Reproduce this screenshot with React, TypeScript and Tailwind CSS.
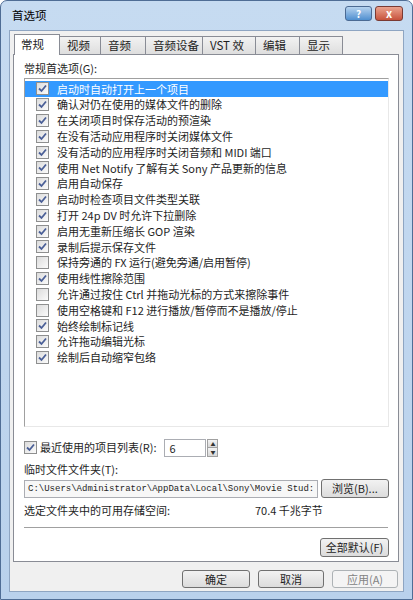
import { useState } from 'react'

const items: [string, boolean][] = [
  ['启动时自动打开上一个项目', true],
  ['确认对仍在使用的媒体文件的删除', true],
  ['在关闭项目时保存活动的预渲染', true],
  ['在没有活动应用程序时关闭媒体文件', true],
  ['没有活动的应用程序时关闭音频和 MIDI 端口', true],
  ['使用 Net Notify 了解有关 Sony 产品更新的信息', true],
  ['启用自动保存', true],
  ['启动时检查项目文件类型关联', true],
  ['打开 24p DV 时允许下拉删除', true],
  ['启用无重新压缩长 GOP 渲染', true],
  ['录制后提示保存文件', true],
  ['保持旁通的 FX 运行(避免旁通/启用暂停)', false],
  ['使用线性擦除范围', true],
  ['允许通过按住 Ctrl 并拖动光标的方式来擦除事件', false],
  ['使用空格键和 F12 进行播放/暂停而不是播放/停止', false],
  ['始终绘制标记线', true],
  ['允许拖动编辑光标', true],
  ['绘制后自动缩窄包络', true],
]

const tabs = ['常规', '视频', '音频', '音频设备', 'VST 效果', '编辑', '显示']
const tabWidths = ['w-[41px]', 'w-[45px]', 'w-[57px]', 'w-[53px]', 'w-[44px]', 'w-[43px]']

function Check({ on }: { on: boolean }) {
  return (
    <div className="w-[13px] h-[13px] border border-[#8e8f8f] bg-gradient-to-br from-[#dcdcdc] to-[#fbfbfb] flex items-center justify-center shrink-0">
      {on && (
        <svg width="9" height="9" viewBox="0 0 9 9">
          <path d="M1 4.5 L3.5 7 L8 1.5" fill="none" stroke="#4a5f97" strokeWidth="1.8" />
        </svg>
      )}
    </div>
  )
}

function Btn({ children, className = '' }: { children: React.ReactNode; className?: string }) {
  return (
    <div className={`border border-[#707070] rounded-[3px] bg-gradient-to-b from-[#f2f2f2] to-[#dcdcdc] flex items-center justify-center text-[11px] ${className}`}>
      {children}
    </div>
  )
}

export default function App() {
  const [sel] = useState(0)
  return (
    <div
      className="w-[413px] h-[600px] bg-gradient-to-b from-[#c6dbf1] to-[#b9d1ec] border border-[#4f6d95] rounded-t-[7px] flex flex-col text-[#1e1e1e]"
      style={{ fontFamily: '"Noto Sans CJK SC", "Liberation Sans", sans-serif' }}
    >
      {/* title bar */}
      <div className="h-[29px] flex items-center justify-between pl-[11px] pr-[9px]">
        <span className="text-[11.5px] text-black">首选项</span>
        <div className="flex gap-[3px] -mt-[4px]">
          <div className="w-[27px] h-[15px] rounded-[3px] border border-[#4b6a93] bg-gradient-to-b from-[#b6d3ef] to-[#4f8fcf] flex items-center justify-center text-white text-[10px] font-bold">?</div>
          <div className="w-[28px] h-[15px] rounded-[3px] border border-[#7a3a33] bg-gradient-to-b from-[#eaa38f] to-[#c6513c] flex items-center justify-center text-white text-[11px] font-bold">x</div>
        </div>
      </div>

      {/* client */}
      <div className="flex-1 mx-[8px] mb-[7px] bg-[#f0f0f0] border border-[#8ea5c2] flex flex-col px-[3px] pt-[2px]">
        {/* tabs */}
        <div className="flex items-end h-[21px] pl-[1px]">
          <div className="w-[46px] h-[21px] bg-white border border-[#898c95] border-b-0 text-[11.5px] pl-[6px] pt-[1px] relative z-10 -mb-[1px]">常规</div>
          {tabs.slice(1).map((t, i) => (
            <div
              key={t}
              className={`${tabWidths[i]} h-[18px] bg-gradient-to-b from-[#f2f2f2] to-[#dedede] border border-[#898c95] border-l-0 border-b-0 text-[11.5px] pl-[7px] leading-[17px]`}
            >
              {t}
            </div>
          ))}
        </div>

        {/* panel */}
        <div className="w-[386px] h-[508px] bg-white border border-[#898c95] flex flex-col pl-[10px] pr-[9px]">
          <div className="text-[11px] mt-[6px] leading-[15px]">常规首选项(G):</div>

          <div className="mt-[2px] h-[349px] border border-[#a0a0a0] border-r-[#e8e8e8] border-b-[#e8e8e8] pt-[2px]">
            {items.map(([t, on], i) => (
              <div
                key={t}
                className={`h-[15.8px] flex items-center pl-[11px] text-[11px] whitespace-nowrap overflow-hidden ${i === sel ? 'bg-[#3399ff] text-white' : ''}`}
              >
                <Check on={on} />
                <span className="ml-[8px]">{t}</span>
              </div>
            ))}
          </div>

          <div className="flex items-center mt-[11px] h-[19px]">
            <Check on />
            <span className="text-[11px] ml-[3px]">最近使用的项目列表(R):</span>
            <div className="ml-[8px] w-[42px] h-[18px] border border-[#abadb3] text-[11px] pl-[4px] leading-[16px]">6</div>
            <div className="w-[11px] h-[18px] flex flex-col ml-[1px]">
              <div className="flex-1 border border-[#a0a0a0] bg-gradient-to-b from-[#f4f4f4] to-[#d8d8d8] flex items-center justify-center text-[5px] text-[#333]">▲</div>
              <div className="flex-1 border border-t-0 border-[#a0a0a0] bg-gradient-to-b from-[#f4f4f4] to-[#d8d8d8] flex items-center justify-center text-[5px] text-[#333]">▼</div>
            </div>
          </div>

          <div className="text-[11px] mt-[5px] leading-[15px]">临时文件文件夹(T):</div>

          <div className="flex items-center mt-[2px] gap-[3px]">
            <div
              className="w-[297px] h-[18px] border border-[#abadb3] bg-[#f7f7f7] text-[9px] pl-[3px] leading-[16px] whitespace-nowrap"
              style={{ fontFamily: '"Liberation Mono", monospace' }}
            >
              C:\Users\Administrator\AppData\Local\Sony\Movie Stud:
            </div>
            <Btn className="w-[69px] h-[19px]">浏览(B)...</Btn>
          </div>

          <div className="flex text-[11px] mt-[5px] leading-[15px]">
            <span className="w-[231px]">选定文件夹中的可用存储空间:</span>
            <span>70.4 千兆字节</span>
          </div>

          <div className="h-[2px] bg-[#a0a0a0] border-b border-white mt-[9px] mr-[1px]" />

          <div className="flex justify-end mt-[9px]">
            <Btn className="w-[69px] h-[19px]">全部默认(F)</Btn>
          </div>
        </div>

        {/* bottom buttons */}
        <div className="flex justify-end gap-[8px] mt-[8px] pr-[2px]">
          <Btn className="w-[68px] h-[18px] border-[#3c7fb1] from-[#eaf6fd] to-[#bee6fd]">确定</Btn>
          <Btn className="w-[66px] h-[18px]">取消</Btn>
          <Btn className="w-[66px] h-[18px] border-[#adb2b5] text-[#838383] from-[#f4f4f4] to-[#f4f4f4]">应用(A)</Btn>
        </div>
      </div>
    </div>
  )
}
